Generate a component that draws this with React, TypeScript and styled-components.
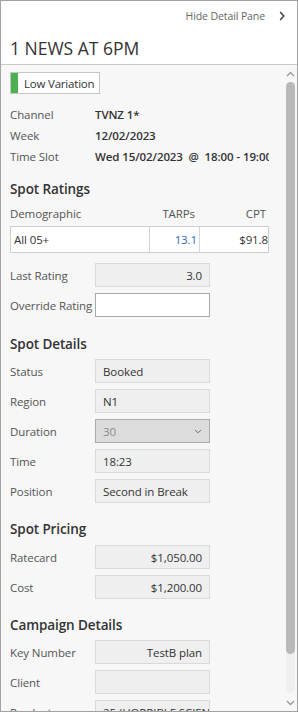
import React from "react";
import styled, { createGlobalStyle } from "styled-components";

const Global = createGlobalStyle`
  html, body { margin: 0; padding: 0; background: #ffffff; }
  body { font-family: "Open Sans", "Noto Sans", sans-serif; font-size: 11.5px; letter-spacing: -0.1px; color: #333; }
  * { box-sizing: border-box; }
`;

const Panel = styled.div`
  width: 298px;
  height: 712px;
  border: 1px solid #a3a3a3;
  display: flex;
  flex-direction: column;
  overflow: hidden;
`;

const Header = styled.header`
  height: 64px;
  flex: none;
  background: #ffffff;
  border-bottom: 1px solid #c9c9c9;
  padding: 6px 0 0 9px;
`;

const HideBar = styled.div`
  display: flex;
  justify-content: flex-end;
  align-items: center;
  height: 18px;
  padding-right: 12px;
  gap: 14px;
  font-size: 10.5px;
  color: #666;
`;

const Title = styled.h1`
  margin: 11px 0 0 0;
  font-size: 17.5px;
  font-weight: 400;
  color: #333;
  line-height: 24px;
  letter-spacing: 0;
`;

const Body = styled.div`
  flex: 1;
  min-height: 0;
  display: flex;
  background: #f7f7f7;
`;

const Content = styled.div`
  flex: 1;
  min-width: 0;
  overflow: hidden;
  padding: 7px 16px 0 9px;
`;

const Badge = styled.div`
  display: inline-flex;
  align-items: stretch;
  height: 22px;
  border: 1px solid #c6c6c6;
  background: #ffffff;
`;

const BadgeBar = styled.span<{ $color: string }>`
  width: 7px;
  background: ${(p) => p.$color};
`;

const BadgeText = styled.span`
  display: flex;
  align-items: center;
  padding: 0 5px 0 6px;
  font-size: 11.5px;
  letter-spacing: -0.2px;
  color: #333;
`;

const InfoGrid = styled.div`
  margin-top: 8px;
  display: grid;
  grid-template-columns: 85px 1fr;
  grid-auto-rows: 21px;
  align-items: center;
`;

const InfoLabel = styled.span`
  color: #555;
  white-space: nowrap;
`;

const InfoValue = styled.span`
  color: #333;
  font-weight: 600;
  white-space: nowrap;
  overflow: hidden;
`;

const Heading = styled.h2<{ $top: number }>`
  margin: ${(p) => p.$top}px 0 0 0;
  font-size: 13.5px;
  font-weight: 600;
  color: #333;
  line-height: 20px;
`;

const TableHead = styled.div`
  margin-top: 5px;
  display: grid;
  grid-template-columns: 138px 50px 71px;
  line-height: 20px;
  color: #555;
`;

const HeadCell = styled.span<{ $right?: boolean }>`
  text-align: ${(p) => (p.$right ? "right" : "left")};
  padding-right: ${(p) => (p.$right ? "3px" : "0")};
  white-space: nowrap;
`;

const TableRow = styled.div`
  margin-top: 2px;
  height: 27px;
  border: 1px solid #cfcfcf;
  background: #ffffff;
  display: grid;
  grid-template-columns: 138px 50px 71px;
  align-items: center;
`;

const Cell = styled.span<{ $right?: boolean; $blue?: boolean; $sep?: boolean }>`
  height: 100%;
  display: flex;
  align-items: center;
  justify-content: ${(p) => (p.$right ? "flex-end" : "flex-start")};
  padding: ${(p) => (p.$right ? "0 2px 0 0" : "0 0 0 3px")};
  color: ${(p) => (p.$blue ? "#2b6cc4" : "#333")};
  border-left: ${(p) => (p.$sep ? "1px solid #d6d6d6" : "none")};
  white-space: nowrap;
  overflow: hidden;
`;

const FieldList = styled.div<{ $top: number }>`
  margin-top: ${(p) => p.$top}px;
  display: flex;
  flex-direction: column;
  gap: 6px;
`;

const Field = styled.div`
  display: grid;
  grid-template-columns: 85px 115px;
  align-items: center;
  height: 24px;
`;

const FieldLabel = styled.span`
  color: #555;
  white-space: nowrap;
`;

const Box = styled.div<{ $variant?: "ro" | "edit" | "select"; $right?: boolean }>`
  height: 24px;
  display: flex;
  align-items: center;
  justify-content: ${(p) => (p.$right ? "flex-end" : "space-between")};
  padding: 0 7px;
  white-space: nowrap;
  overflow: hidden;
  background: ${(p) =>
    p.$variant === "edit" ? "#ffffff" : p.$variant === "select" ? "#dcdcdc" : "#efefef"};
  border: 1px solid
    ${(p) => (p.$variant === "edit" ? "#a9a9a9" : p.$variant === "select" ? "#ababab" : "#dadada")};
  color: ${(p) => (p.$variant === "select" ? "#8a8a8a" : "#333")};
`;

const Scrollbar = styled.div`
  width: 12px;
  flex: none;
  display: flex;
  flex-direction: column;
  align-items: center;
  padding: 3px 1px 2px 0;
`;

const Arrow = styled.div`
  height: 12px;
  display: flex;
  align-items: center;
  justify-content: center;
  color: #9a9a9a;
`;

const Track = styled.div`
  flex: 1;
  width: 9px;
  margin: 2px 0 4px;
  background: #efefef;
  border-radius: 5px;
  display: flex;
  flex-direction: column;
`;

const Thumb = styled.div`
  height: 572px;
  background: #b9b9b9;
  border-radius: 5px;
`;

const Chevron = ({ dir }: { dir: "up" | "down" }) => (
  <svg width="9" height="6" viewBox="0 0 9 6">
    <path
      d={dir === "up" ? "M1 5 L4.5 1.5 L8 5" : "M1 1 L4.5 4.5 L8 1"}
      fill="none"
      stroke="currentColor"
      strokeWidth="1.4"
    />
  </svg>
);

const RightChevron = () => (
  <svg width="6" height="10" viewBox="0 0 6 10">
    <path d="M1.2 1 L4.8 5 L1.2 9" fill="none" stroke="#444" strokeWidth="1.5" />
  </svg>
);

const SelectArrow = () => (
  <svg width="8" height="5" viewBox="0 0 8 5">
    <path d="M1 1 L4 3.8 L7 1" fill="none" stroke="#777" strokeWidth="1" />
  </svg>
);

export default function App() {
  return (
    <>
      <Global />
      <Panel>
        <Header>
          <HideBar>
            <span>Hide Detail Pane</span>
            <RightChevron />
          </HideBar>
          <Title>1 NEWS AT 6PM</Title>
        </Header>
        <Body>
          <Content>
            <Badge>
              <BadgeBar $color="#4caf50" />
              <BadgeText>Low Variation</BadgeText>
            </Badge>
            <InfoGrid>
              <InfoLabel>Channel</InfoLabel>
              <InfoValue>TVNZ 1*</InfoValue>
              <InfoLabel>Week</InfoLabel>
              <InfoValue>12/02/2023</InfoValue>
              <InfoLabel>Time Slot</InfoLabel>
              <InfoValue>Wed 15/02/2023&nbsp; @&nbsp; 18:00 - 19:00</InfoValue>
            </InfoGrid>

            <Heading $top={12}>Spot Ratings</Heading>
            <TableHead>
              <HeadCell>Demographic</HeadCell>
              <HeadCell $right>TARPs</HeadCell>
              <HeadCell $right>CPT</HeadCell>
            </TableHead>
            <TableRow>
              <Cell>All 05+</Cell>
              <Cell $right $blue $sep>13.1</Cell>
              <Cell $right $sep>$91.8</Cell>
            </TableRow>

            <FieldList $top={10}>
              <Field>
                <FieldLabel>Last Rating</FieldLabel>
                <Box $right>3.0</Box>
              </Field>
              <Field>
                <FieldLabel>Override Rating</FieldLabel>
                <Box $variant="edit" />
              </Field>
            </FieldList>

            <Heading $top={17}>Spot Details</Heading>
            <FieldList $top={5}>
              <Field>
                <FieldLabel>Status</FieldLabel>
                <Box>Booked</Box>
              </Field>
              <Field>
                <FieldLabel>Region</FieldLabel>
                <Box>N1</Box>
              </Field>
              <Field>
                <FieldLabel>Duration</FieldLabel>
                <Box $variant="select">
                  <span>30</span>
                  <SelectArrow />
                </Box>
              </Field>
              <Field>
                <FieldLabel>Time</FieldLabel>
                <Box>18:23</Box>
              </Field>
              <Field>
                <FieldLabel>Position</FieldLabel>
                <Box>Second in Break</Box>
              </Field>
            </FieldList>

            <Heading $top={16}>Spot Pricing</Heading>
            <FieldList $top={6}>
              <Field>
                <FieldLabel>Ratecard</FieldLabel>
                <Box $right>$1,050.00</Box>
              </Field>
              <Field>
                <FieldLabel>Cost</FieldLabel>
                <Box $right>$1,200.00</Box>
              </Field>
            </FieldList>

            <Heading $top={16}>Campaign Details</Heading>
            <FieldList $top={5}>
              <Field>
                <FieldLabel>Key Number</FieldLabel>
                <Box $right>TestB plan</Box>
              </Field>
              <Field>
                <FieldLabel>Client</FieldLabel>
                <Box />
              </Field>
              <Field>
                <FieldLabel>Product</FieldLabel>
                <Box>25 (HORRIBLE SCIENCE</Box>
              </Field>
            </FieldList>
          </Content>
          <Scrollbar>
            <Arrow>
              <Chevron dir="up" />
            </Arrow>
            <Track>
              <Thumb />
            </Track>
            <Arrow>
              <Chevron dir="down" />
            </Arrow>
          </Scrollbar>
        </Body>
      </Panel>
    </>
  );
}
